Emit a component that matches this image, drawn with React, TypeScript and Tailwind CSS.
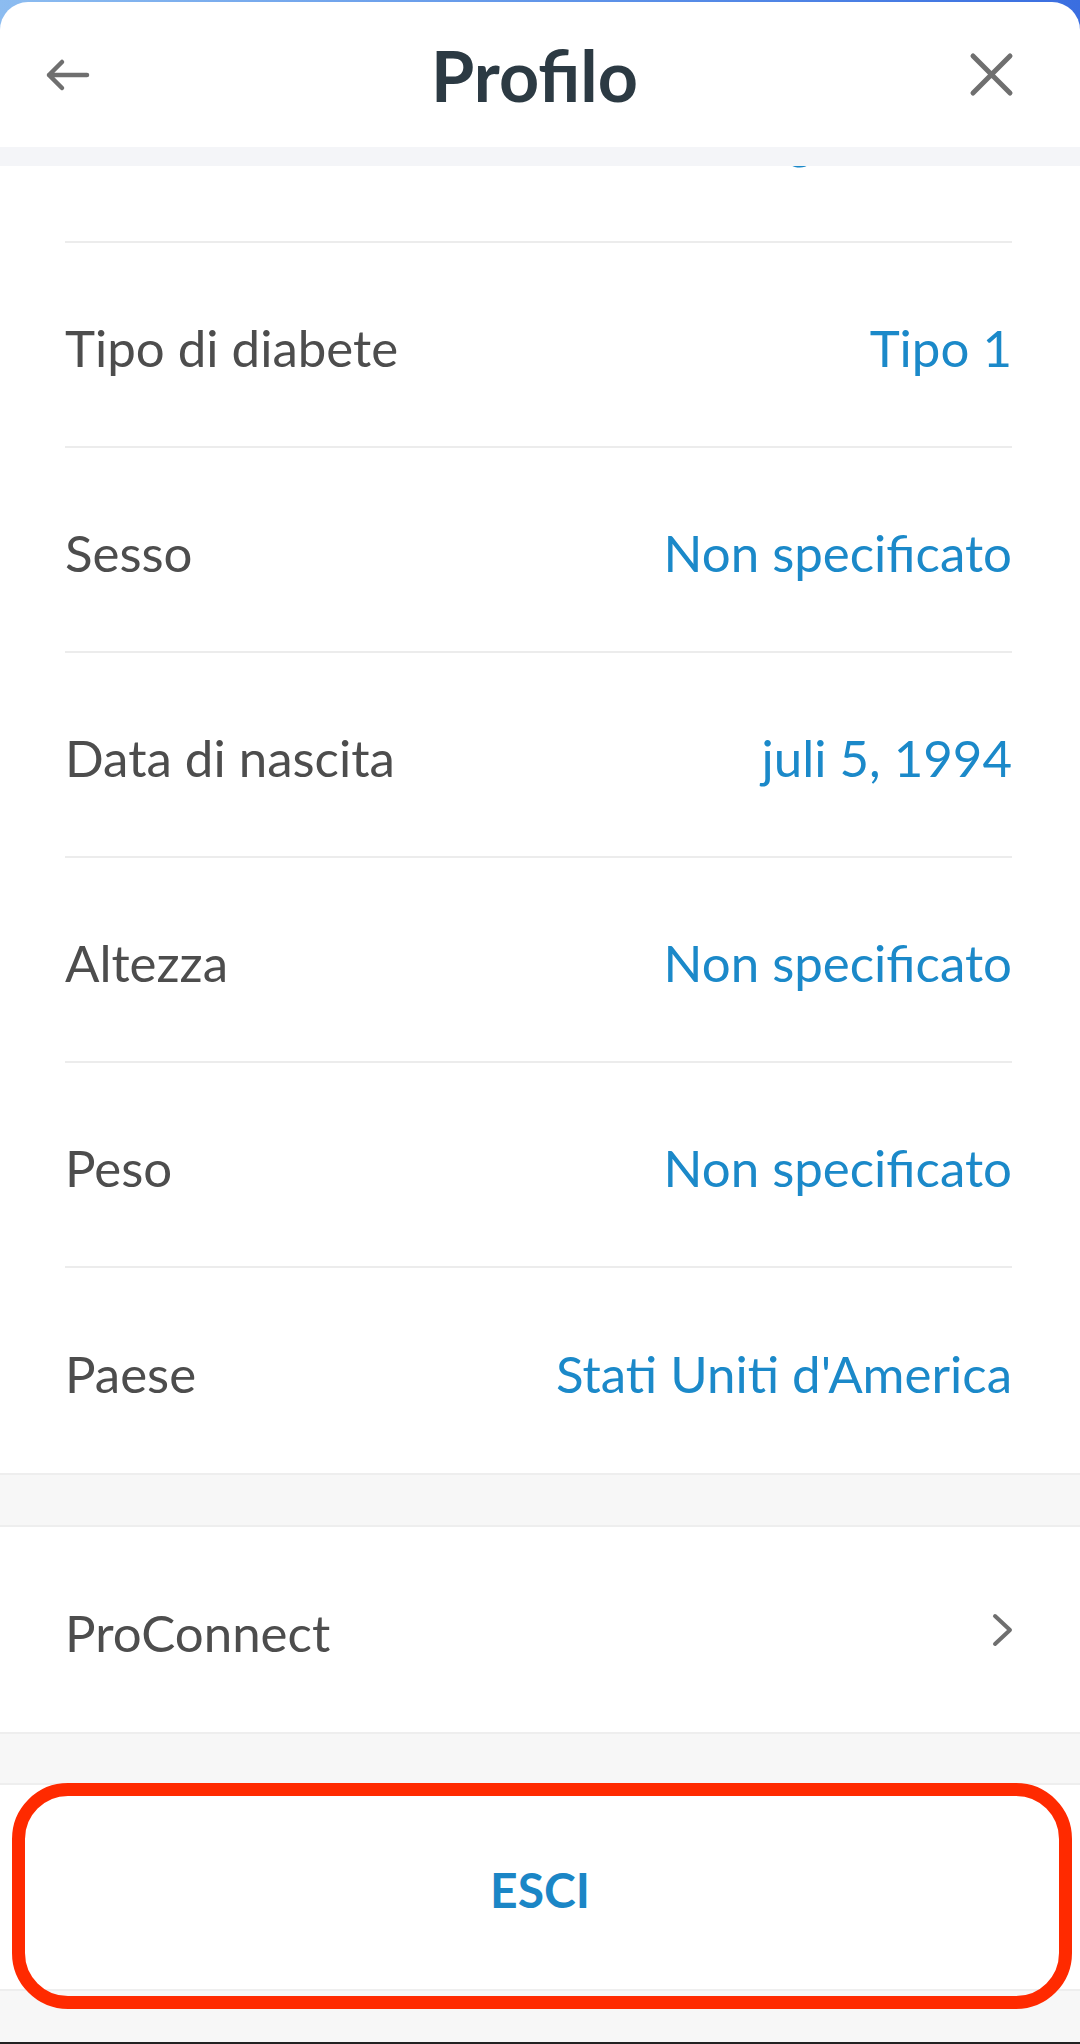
import { ReactNode } from "react";

const rows = [
  { label: "Tipo di diabete", value: "Tipo 1" },
  { label: "Sesso", value: "Non specificato" },
  { label: "Data di nascita", value: "juli 5, 1994" },
  { label: "Altezza", value: "Non specificato" },
  { label: "Peso", value: "Non specificato" },
  { label: "Paese", value: "Stati Uniti d'America" },
];

const Row = ({ label, children, last }: { label: string; children: ReactNode; last?: boolean }) => (
  <div className="bg-white pl-[65px] pr-[68px]">
    <div
      className={
        last
          ? "h-[205px] flex items-center justify-between"
          : "h-[205px] flex items-center justify-between border-b-2 border-[#ececec]"
      }
    >
      <span className="text-[51px] leading-none text-[#4d4d4d] pt-[6px]">{label}</span>
      {children}
    </div>
  </div>
);

const Gap = ({ h }: { h: string }) => (
  <div className={`${h} bg-[#f7f7f7] border-y-2 border-[#eeeeee]`} />
);

export default function App() {
  return (
    <div
      className="w-[1080px] h-[2044px] overflow-hidden bg-gradient-to-r from-[#8cbcf0] to-[#3a6ee0]"
      style={{ fontFamily: "Lato, 'Open Sans', sans-serif" }}
    >
      <div className="mt-[2px] bg-white rounded-t-[28px] overflow-hidden">
        {/* Header */}
        <div className="h-[145px] flex items-center pl-[45px] pr-[66px]">
          <div className="w-[50px] flex items-center">
            <svg width="46" height="34" viewBox="0 0 46 34" fill="none">
              <path
                d="M4 17 H42 M17 4 L4 17 L17 30"
                stroke="#6f6f6f"
                strokeWidth="4.5"
                strokeLinecap="round"
                strokeLinejoin="round"
              />
            </svg>
          </div>
          <h1 className="flex-1 text-center text-[70px] leading-none font-bold text-[#2c3a43] pl-[10px]">
            Profilo
          </h1>
          <div className="w-[50px] flex items-center justify-end">
            <svg width="45" height="45" viewBox="0 0 45 45" fill="none">
              <path
                d="M4 4 L41 41 M41 4 L4 41"
                stroke="#6f6f6f"
                strokeWidth="5"
                strokeLinecap="round"
              />
            </svg>
          </div>
        </div>
        <div className="h-[19px] bg-[#f4f5f8]" />

        {/* Scrolled content: tail of the previous row */}
        <div className="bg-white pl-[65px] pr-[68px]">
          <div className="h-[77px] overflow-hidden border-b-2 border-[#ececec] flex justify-end">
            <span className="-mt-[53px] text-[51px] leading-none text-[#1b89c9]">
              mario.rossi@gmail.com
            </span>
          </div>
        </div>

        {rows.map((r, i) => (
          <Row key={r.label} label={r.label} last={i === rows.length - 1}>
            <span className="text-[51px] leading-none text-[#1b89c9] pt-[6px]">{r.value}</span>
          </Row>
        ))}

        <Gap h="h-[54px]" />

        <Row label="ProConnect" last>
          <svg width="22" height="34" viewBox="0 0 22 34" fill="none" className="mr-[-2px]">
            <path
              d="M3 3 L18 17 L3 31"
              stroke="#6f6f6f"
              strokeWidth="4"
              strokeLinecap="round"
              strokeLinejoin="round"
            />
          </svg>
        </Row>

        <Gap h="h-[53px]" />

        {/* Logout */}
        <div className="relative h-[204px] bg-white flex items-center justify-center">
          <span className="text-[48px] leading-none font-bold text-[#1b86c6] pt-[6px]">ESCI</span>
          <div className="absolute left-[12px] right-[8px] top-[-2px] bottom-[-20px] border-[13px] border-[#ff2a00] rounded-[56px]" />
        </div>

        <div className="h-[53px] bg-[#f7f7f7] border-t-2 border-[#eeeeee]" />
        <div className="h-[2px] bg-[#222222]" />
      </div>
    </div>
  );
}
